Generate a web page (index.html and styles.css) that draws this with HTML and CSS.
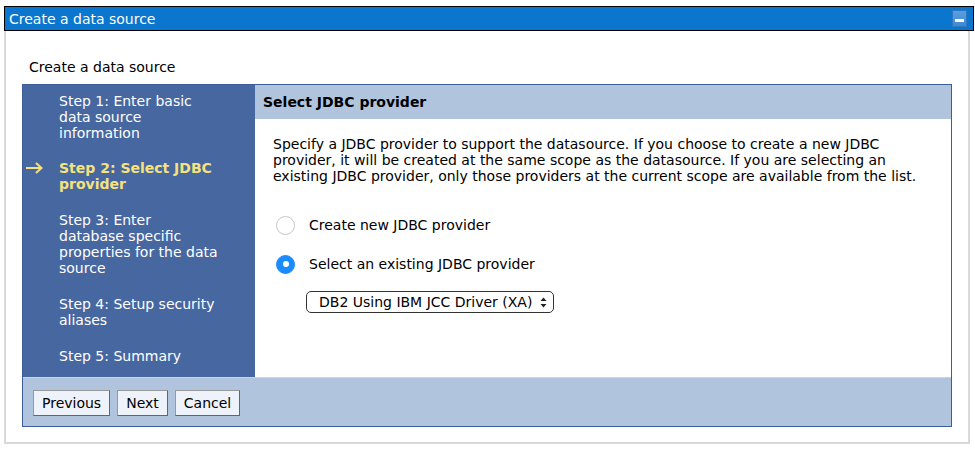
FILE: index.html
```html
<!DOCTYPE html>
<html>
<head>
<meta charset="utf-8">
<link rel="stylesheet" href="styles.css">
</head>
<body>
<div class="window">
  <div class="titlebar">
    <span class="title">Create a data source</span>
    <span class="minbtn"><span class="dash"></span></span>
  </div>
  <div class="frame">
    <div class="pagehead">Create a data source</div>
    <div class="wizard">
      <div class="nav">
        <div class="step"><span class="arrow"></span><span class="steptext">Step 1: Enter basic data source information</span></div>
        <div class="step current"><span class="arrow"><svg width="17" height="12" viewBox="0 0 17 12"><path d="M0 6 H15 M10 1 L15.5 6 L10 11" fill="none" stroke="#f5e27c" stroke-width="2"/></svg></span><span class="steptext">Step 2: Select JDBC provider</span></div>
        <div class="step"><span class="arrow"></span><span class="steptext">Step 3: Enter database specific properties for the data source</span></div>
        <div class="step"><span class="arrow"></span><span class="steptext">Step 4: Setup security aliases</span></div>
        <div class="step"><span class="arrow"></span><span class="steptext">Step 5: Summary</span></div>
      </div>
      <div class="main">
        <div class="mainhead">Select JDBC provider</div>
        <div class="mainbody">
          <p class="desc">Specify a JDBC provider to support the datasource. If you choose to create a new JDBC provider, it will be created at the same scope as the datasource. If you are selecting an existing JDBC provider, only those providers at the current scope are available from the list.</p>
          <div class="option"><span class="radio"></span><span class="optlabel">Create new JDBC provider</span></div>
          <div class="option"><span class="radio checked"></span><span class="optlabel">Select an existing JDBC provider</span></div>
          <div class="selectrow">
            <div class="select"><span class="seltext">DB2 Using IBM JCC Driver (XA)</span>
              <svg class="updown" width="7" height="11" viewBox="0 0 7 11"><path d="M3.5 0.5 L6.5 4 L0.5 4 Z M3.5 10.5 L6.5 7 L0.5 7 Z" fill="#222"/></svg>
            </div>
          </div>
        </div>
      </div>
      <div class="buttonbar">
        <button class="btn">Previous</button>
        <button class="btn">Next</button>
        <button class="btn">Cancel</button>
      </div>
    </div>
  </div>
</div>
</body>
</html>
```
FILE: styles.css
```css
* { box-sizing: border-box; }
html, body { margin: 0; padding: 0; background: #ffffff; }
body {
  font-family: "DejaVu Sans", Verdana, sans-serif;
  font-size: 13px;
  color: #000;
}
.window {
  margin: 6px 0 0 4px;
  width: 970px;
}
.titlebar {
  height: 25px;
  background: #0b76ce;
  border: 1px solid #000;
  display: flex;
  align-items: center;
  justify-content: space-between;
  padding: 0 6px 0 4px;
}
.title {
  color: #fff;
  font-size: 14px;
  line-height: 16px;
}
.minbtn {
  width: 15px;
  height: 17px;
  background: linear-gradient(#5a9ee0, #3f89d4);
  border: 1px solid #2f77c0;
  display: flex;
  align-items: flex-end;
  justify-content: center;
  padding-bottom: 4px;
}
.dash {
  width: 9px;
  height: 3px;
  background: #f4f8fc;
}
.frame {
  width: 966px;
  border-left: 2px solid #d9d9d9;
  border-right: 2px solid #d9d9d9;
  border-bottom: 2px solid #d9d9d9;
  padding: 27px 16px 15px 16px;
}
.pagehead {
  padding-left: 7px;
  line-height: 18px;
  font-size: 14px;
  margin-bottom: 8px;
}
.wizard {
  border: 1px solid #3c5d98;
  display: grid;
  grid-template-columns: 232px 1fr;
  grid-template-rows: 292px 49px;
}
.nav {
  background: #4767a1;
  padding-top: 8px;
  display: flex;
  flex-direction: column;
  gap: 19px;
}
.step {
  display: flex;
  color: #fff;
  line-height: 16px;
  font-size: 14px;
}
.step + .step + .step { margin-top: 1px; }
.step .arrow {
  flex: 0 0 36px;
  padding-left: 3px;
  display: flex;
  align-items: center;
  height: 16px;
}
.step .steptext {
  width: 159px;
}
.step.current {
  color: #f5e27c;
  font-weight: bold;
}
.main {
  display: flex;
  flex-direction: column;
  background: #fff;
}
.mainhead {
  height: 34px;
  background: #b0c4de;
  font-weight: bold;
  font-size: 14px;
  display: flex;
  align-items: center;
  padding-left: 8px;
}
.mainbody {
  padding: 17px 17px 0 18px;
}
.desc {
  margin: 0;
  line-height: 16px;
  font-size: 14px;
}
.option {
  display: flex;
  align-items: center;
  height: 20px;
}
.desc + .option { margin-top: 31px; }
.option + .option { margin-top: 19px; }
.radio {
  width: 19px;
  height: 19px;
  border-radius: 50%;
  border: 1px solid #c8c8c8;
  background: #fff;
  margin-left: 3px;
  margin-right: 14px;
  display: flex;
  align-items: center;
  justify-content: center;
}
.radio.checked {
  background: #1a8cff;
  border-color: #1a8cff;
}
.radio.checked::after {
  content: "";
  width: 6px;
  height: 6px;
  border-radius: 50%;
  background: #fff;
}
.optlabel {
  font-size: 14px;
}
.selectrow {
  margin-top: 17px;
  padding-left: 33px;
}
.select {
  display: inline-flex;
  align-items: center;
  width: 248px;
  height: 22px;
  border: 1px solid #333;
  border-radius: 5px;
  padding: 0 6px 0 12px;
  justify-content: space-between;
  background: #fff;
}
.seltext { font-size: 14px; }
.buttonbar {
  grid-column: 1 / span 2;
  background: #b0c4de;
  border-top: 1px solid #c6d5e9;
  display: flex;
  align-items: flex-start;
  padding: 12px 0 0 10px;
  gap: 7px;
}
.btn {
  font-family: "DejaVu Sans", Verdana, sans-serif;
  font-size: 14px;
  height: 26px;
  padding: 0 8px;
  background: #eef3fb;
  border: 1px solid #999;
  border-right-color: #666;
  border-bottom-color: #666;
  border-radius: 0;
  color: #000;
}
```
